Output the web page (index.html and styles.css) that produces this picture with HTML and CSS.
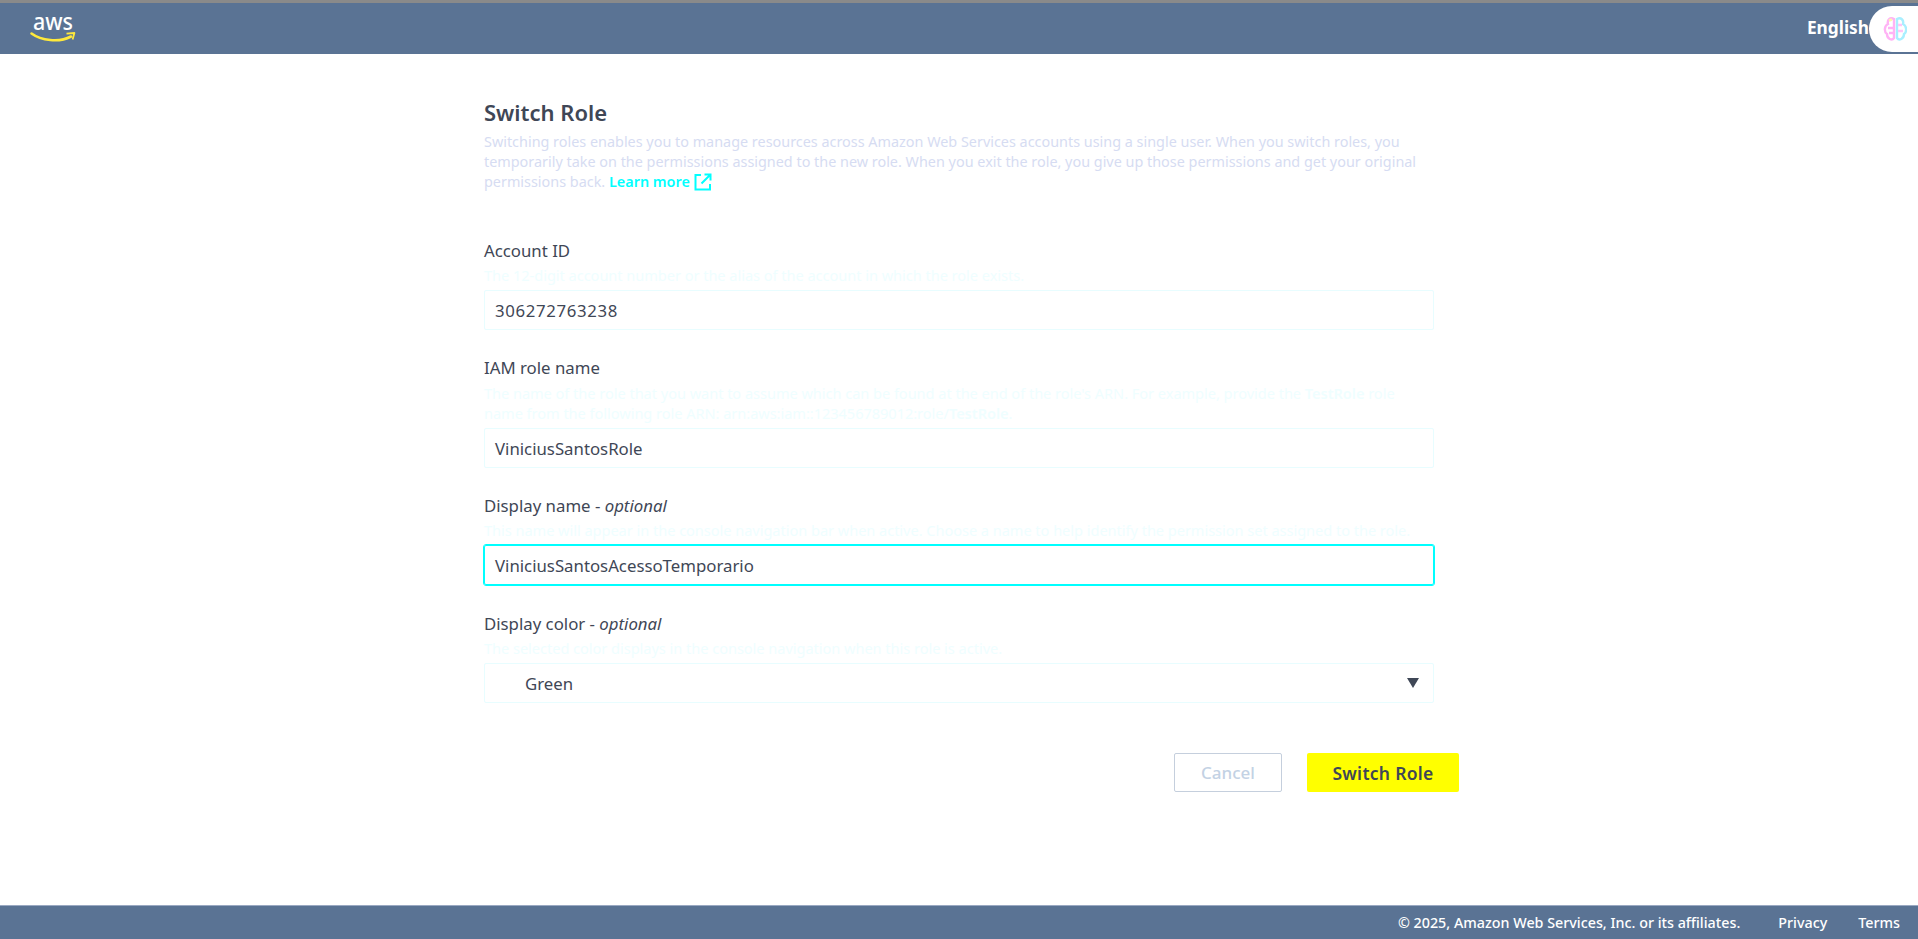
FILE: index.html
```html
<!DOCTYPE html>
<html lang="en">
<head>
<meta charset="utf-8">
<title>Switch Role</title>
<link rel="stylesheet" href="styles.css">
</head>
<body>
<div class="page">
  <header class="topbar">
    <svg class="logo" width="48" height="34" viewBox="0 0 48 34">
      <text class="logo-text" x="3" y="18" textLength="40" lengthAdjust="spacingAndGlyphs">aws</text>
      <path d="M1.5 21.5C11 28.5 29 31 41 24.5" fill="none" stroke="#ffe93b" stroke-width="2.6" stroke-linecap="round"/>
      <path d="M36.5 21.6L44.4 21L42.6 27.6" fill="none" stroke="#ffe93b" stroke-width="1.8" stroke-linejoin="round"/>
    </svg>
    <div class="top-right">
      <span class="lang">English</span>
      <span class="pill">
        <svg width="24" height="24" viewBox="0 0 24 24" fill="none" stroke-width="2.4">
          <path d="M11 2C7 0 4 3 5 7C1 9 1 15 4 17C4 22 9 24 11 21Z" stroke="#ffb3f5"/>
          <path d="M14 2C18 0 21 3 20 7C24 9 24 15 21 17C21 22 16 24 14 21Z" stroke="#a9efff"/>
          <path d="M5 11H10M6 16H10" stroke="#ffb3f5"/>
          <path d="M15 8H19M15 14H20" stroke="#ffc6f7"/>
          <path d="M6 3.5L9 2.5" stroke="#fff6b0"/>
        </svg>
      </span>
    </div>
  </header>

  <main class="main">
    <form class="form">
      <h1 class="title">Switch Role</h1>
      <p class="intro">Switching roles enables you to manage resources across Amazon Web Services accounts using a single user. When you switch roles, you temporarily take on the permissions assigned to the new role. When you exit the role, you give up those permissions and get your original permissions back. <a class="learn" href="#">Learn more <svg class="ext" width="18" height="18" viewBox="0 0 18 18" fill="none" stroke="#00ffff" stroke-width="2"><path d="M7 2H1.5V16.5H16V11"/><path d="M7.5 10.5L16 2M10.5 1.5H16.5V7.5"/></svg></a></p>

      <div class="field first">
        <label class="label">Account ID</label>
        <div class="hint">The 12-digit account number or the alias of the account in which the role exists.</div>
        <div class="input num">306272763238</div>
      </div>

      <div class="field">
        <label class="label">IAM role name</label>
        <div class="hint two-line">The name of the role that you want to assume which can be found at the end of the role's ARN. For example, provide the <b>TestRole</b> role name from the following role ARN: arn:aws:iam::123456789012:role/<b>TestRole</b>.</div>
        <div class="input">ViniciusSantosRole</div>
      </div>

      <div class="field">
        <label class="label">Display name - <em>optional</em></label>
        <div class="hint">This name will appear in the console navigation bar when active. Choose a name to help identify the permission set assigned to the role.</div>
        <div class="input focused">ViniciusSantosAcessoTemporario</div>
      </div>

      <div class="field wide-gap">
        <label class="label">Display color - <em>optional</em></label>
        <div class="hint">The selected color displays in the console navigation when this role is active.</div>
        <div class="input select"><span>Green</span><i class="caret"></i></div>
      </div>

      <div class="actions">
        <button type="button" class="btn cancel">Cancel</button>
        <button type="button" class="btn primary">Switch Role</button>
      </div>
    </form>
  </main>

  <footer class="footer">
    <span>© 2025, Amazon Web Services, Inc. or its affiliates.</span>
    <nav class="footer-links">
      <a href="#">Privacy</a>
      <a href="#">Terms</a>
    </nav>
  </footer>
</div>
</body>
</html>
```

FILE: styles.css
```css
* { box-sizing: border-box; }
html, body { margin: 0; height: 100%; }
body {
  font-family: "Noto Sans", "Open Sans", sans-serif;
  font-size: 15px;
  color: #3f4756;
  background: #fff;
  overflow: hidden;
}
.page { height: 939px; display: flex; flex-direction: column; border-top: 3px solid #8a8a8a; }
.topbar {
  height: 51px;
  flex: none;
  background: #5a7394;
  display: flex;
  align-items: center;
  justify-content: space-between;
  padding-left: 30px;
}
.logo { display: block; margin-top: 1px; overflow: visible; }
.logo-text { font-family: "Noto Sans", sans-serif; font-size: 24px; font-weight: 500; fill: #fff; }
.top-right { display: flex; align-items: center; }
.lang { color: #fff; font-weight: 700; font-size: 17.3px; padding-bottom: 3px; }
.pill {
  width: 49px;
  height: 46px;
  background: #fff;
  border-radius: 23px 0 0 23px;
  display: flex;
  align-items: center;
  padding-left: 14px;
}
.main { flex: 1; }
.form { width: 950px; margin: 0 auto; padding-top: 45px; }
.title { margin: 0 0 6px; font-size: 22px; line-height: 27px; font-weight: 600; color: #3f4756; }
.intro { margin: 0; font-size: 14.4px; line-height: 20px; color: #d6dcf2; }
.learn { color: #00ffff; font-weight: 600; text-decoration: none; }
.ext { vertical-align: -4px; }
.field { margin-top: 27px; }
.field.first { margin-top: 48px; }
.field.wide-gap { margin-top: 28px; }
.label { display: block; font-size: 16.8px; line-height: 21px; color: #3f4756; }
.hint { font-size: 14.5px; line-height: 20px; color: #effeff; margin-top: 4px; }
.hint.two-line { margin-top: 5px; }
.hint b { font-weight: 600; }
.input {
  height: 40px;
  margin-top: 5px;
  border: 1px solid #e8fdff;
  border-radius: 2px;
  padding: 0 10px;
  display: flex;
  align-items: center;
  font-size: 16.8px;
  color: #3f4756;
}
.input.num { letter-spacing: .65px; }
.input.focused { border-color: #00ffff; outline: 1px solid #00ffff; }
.input.select { justify-content: space-between; padding: 0 14px 0 40px; }
.caret { width: 0; height: 0; border-left: 6.5px solid transparent; border-right: 6.5px solid transparent; border-top: 10px solid #3f4756; }
.actions { display: flex; justify-content: flex-end; gap: 25px; margin-top: 50px; margin-right: -25px; }
.btn { height: 39px; font: 500 17px "Noto Sans", sans-serif; border-radius: 2px; cursor: pointer; }
.cancel { width: 108px; background: #fff; border: 1px solid #c5cfdd; color: #c3d2e4; }
.primary { width: 152px; background: #ffff00; border: 0; color: #3f4756; font-weight: 600; font-size: 17.5px; letter-spacing: .3px; }
.footer {
  height: 34px;
  flex: none;
  background: #5a7394;
  border-top: 1px solid #9aa9c2;
  display: flex;
  justify-content: flex-end;
  align-items: center;
  gap: 38px;
  padding-right: 18px;
  color: #fff;
  font-size: 14.3px;
  font-weight: 500;
}
.footer-links { display: flex; gap: 31px; }
.footer a { color: #fff; text-decoration: none; }
```
